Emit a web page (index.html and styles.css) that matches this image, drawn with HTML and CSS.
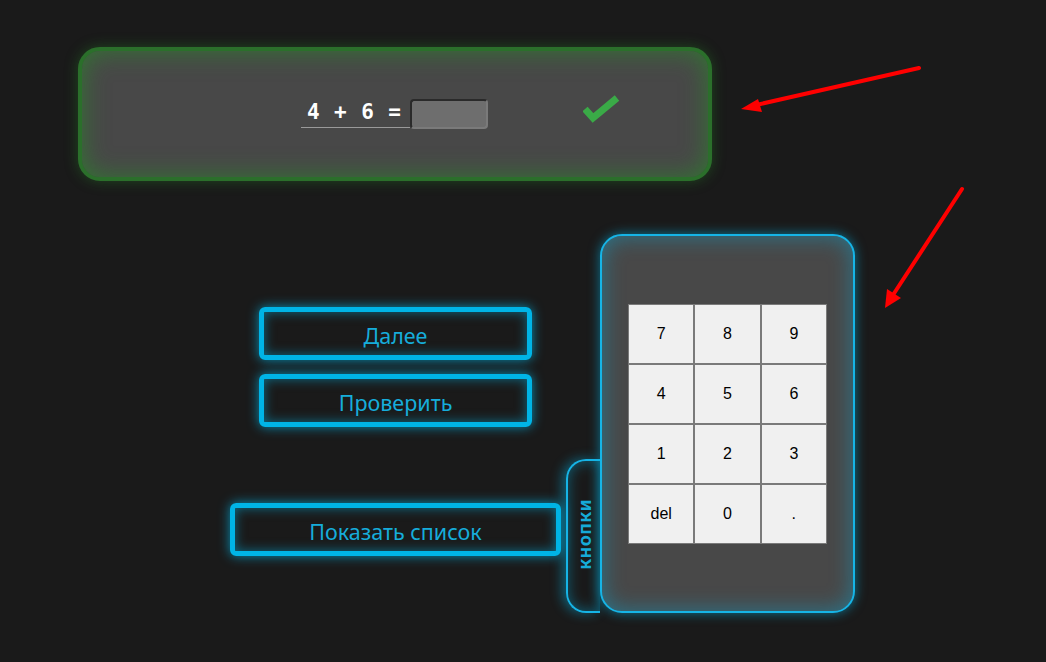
FILE: index.html
```html
<!DOCTYPE html>
<html lang="ru">
<head>
<meta charset="utf-8">
<title>Тренажёр</title>
<link rel="stylesheet" href="styles.css">
</head>
<body>
<div class="page">
  <div class="task">
    <div class="equation">
      <span class="expr">4 + 6 =</span>
      <span class="answer"></span>
    </div>
    <svg class="check" viewBox="0 0 38 30" width="38" height="30">
      <polyline points="2,14 10,23 34,3" fill="none" stroke="#3aaa47" stroke-width="7"/>
    </svg>
  </div>

  <div class="lower">
    <div class="actions">
      <button class="neon short">Далее</button>
      <button class="neon short second">Проверить</button>
      <button class="neon wide">Показать список</button>
    </div>
    <div class="tab"><span>кнопки</span></div>
    <div class="keypad">
      <div class="keys">
        <div class="key">7</div><div class="key">8</div><div class="key">9</div>
        <div class="key">4</div><div class="key">5</div><div class="key">6</div>
        <div class="key">1</div><div class="key">2</div><div class="key">3</div>
        <div class="key">del</div><div class="key">0</div><div class="key">.</div>
      </div>
    </div>
  </div>

  <svg class="arrows" width="1046" height="662" viewBox="0 0 1046 662">
    <line x1="919" y1="68" x2="756" y2="105" stroke="#ff0000" stroke-width="4" stroke-linecap="round"/>
    <polygon points="741,109 758,99 762,112" fill="#ff0000"/>
    <line x1="962" y1="189" x2="893" y2="295" stroke="#ff0000" stroke-width="4" stroke-linecap="round"/>
    <polygon points="885,308 887,289 901,298" fill="#ff0000"/>
  </svg>
</div>
</body>
</html>
```

FILE: styles.css
```css
html, body {
  margin: 0;
  padding: 0;
  background: #1a1a1a;
}
body {
  font-family: "Noto Sans", "Open Sans", sans-serif;
}
.page {
  position: relative;
  width: 1046px;
  height: 662px;
  overflow: hidden;
  padding: 47px 0 0 78px;
  box-sizing: border-box;
}
.task {
  box-sizing: border-box;
  width: 634px;
  height: 134px;
  border: 4px solid #2b6f2b;
  border-radius: 22px;
  background: #484848;
  box-shadow: 0 0 14px rgba(40, 140, 40, 0.4), inset 0 0 26px rgba(40, 140, 40, 0.7);
  display: flex;
  align-items: center;
  padding-left: 219px;
}
.equation {
  display: flex;
  align-items: flex-end;
  margin-top: -2px;
}
.expr {
  font-family: "DejaVu Sans Mono", monospace;
  font-weight: bold;
  font-size: 21px;
  letter-spacing: 0.9px;
  color: #ffffff;
  line-height: 22px;
  padding: 0 8px 4px 6px;
  border-bottom: 1px solid #9a9a9a;
  width: 95px;
  white-space: pre;
}
.answer {
  box-sizing: border-box;
  width: 78px;
  height: 30px;
  background: #6e6e6e;
  border: 2px solid #2a2a2a;
  border-right-color: #7a7a7a;
  border-bottom-color: #7a7a7a;
  border-radius: 4px;
  margin-bottom: -1px;
}
.check {
  display: block;
  margin-left: 95px;
  margin-top: -8px;
}
.lower {
  display: flex;
  margin: 53px 0 0 152px;
}
.actions {
  display: flex;
  flex-direction: column;
  align-items: flex-start;
  width: 331px;
  padding-top: 73px;
}
.neon {
  box-sizing: border-box;
  height: 53px;
  border: 5px solid #00b4e6;
  border-radius: 6px;
  background: transparent;
  color: #16addb;
  font-family: "Noto Sans", "Open Sans", sans-serif;
  font-size: 21.5px;
  padding: 4px 0 0;
  box-shadow: 0 0 12px rgba(0, 180, 230, 0.75), inset 0 0 12px rgba(0, 180, 230, 0.55);
}
.short {
  width: 273px;
  margin-left: 29px;
}
.second {
  margin-top: 14px;
}
.wide {
  width: 331px;
  margin-top: 76px;
}
.tab {
  box-sizing: border-box;
  align-self: flex-end;
  width: 34px;
  height: 154px;
  margin-left: 5px;
  border: 2px solid #16b4e6;
  border-right: none;
  border-radius: 20px 0 0 20px;
  box-shadow: -4px 0 12px rgba(0, 180, 230, 0.45), inset 0 0 14px rgba(0, 180, 230, 0.45);
  display: flex;
  align-items: center;
  justify-content: center;
}
.tab span {
  writing-mode: vertical-rl;
  transform: rotate(180deg);
  color: #16aad8;
  font-weight: bold;
  font-size: 18px;
  letter-spacing: 0.3px;
  margin-top: -4px;
}
.keypad {
  box-sizing: border-box;
  width: 255px;
  height: 379px;
  border: 2px solid #16b4e6;
  border-radius: 22px;
  background: #484848;
  box-shadow: 0 0 12px rgba(0, 180, 230, 0.6), inset 0 0 22px rgba(0, 180, 230, 0.45);
  display: flex;
  align-items: center;
  justify-content: center;
}
.keys {
  display: grid;
  grid-template-columns: repeat(3, 1fr);
  grid-template-rows: repeat(4, 60px);
  width: 199px;
}
.key {
  background: #f0f0f0;
  border: 1px solid #7a7a7a;
  display: flex;
  align-items: center;
  justify-content: center;
  font-family: "Liberation Sans", Arial, sans-serif;
  font-size: 16px;
  color: #000;
}
.arrows {
  position: absolute;
  left: 0;
  top: 0;
  pointer-events: none;
}
```
